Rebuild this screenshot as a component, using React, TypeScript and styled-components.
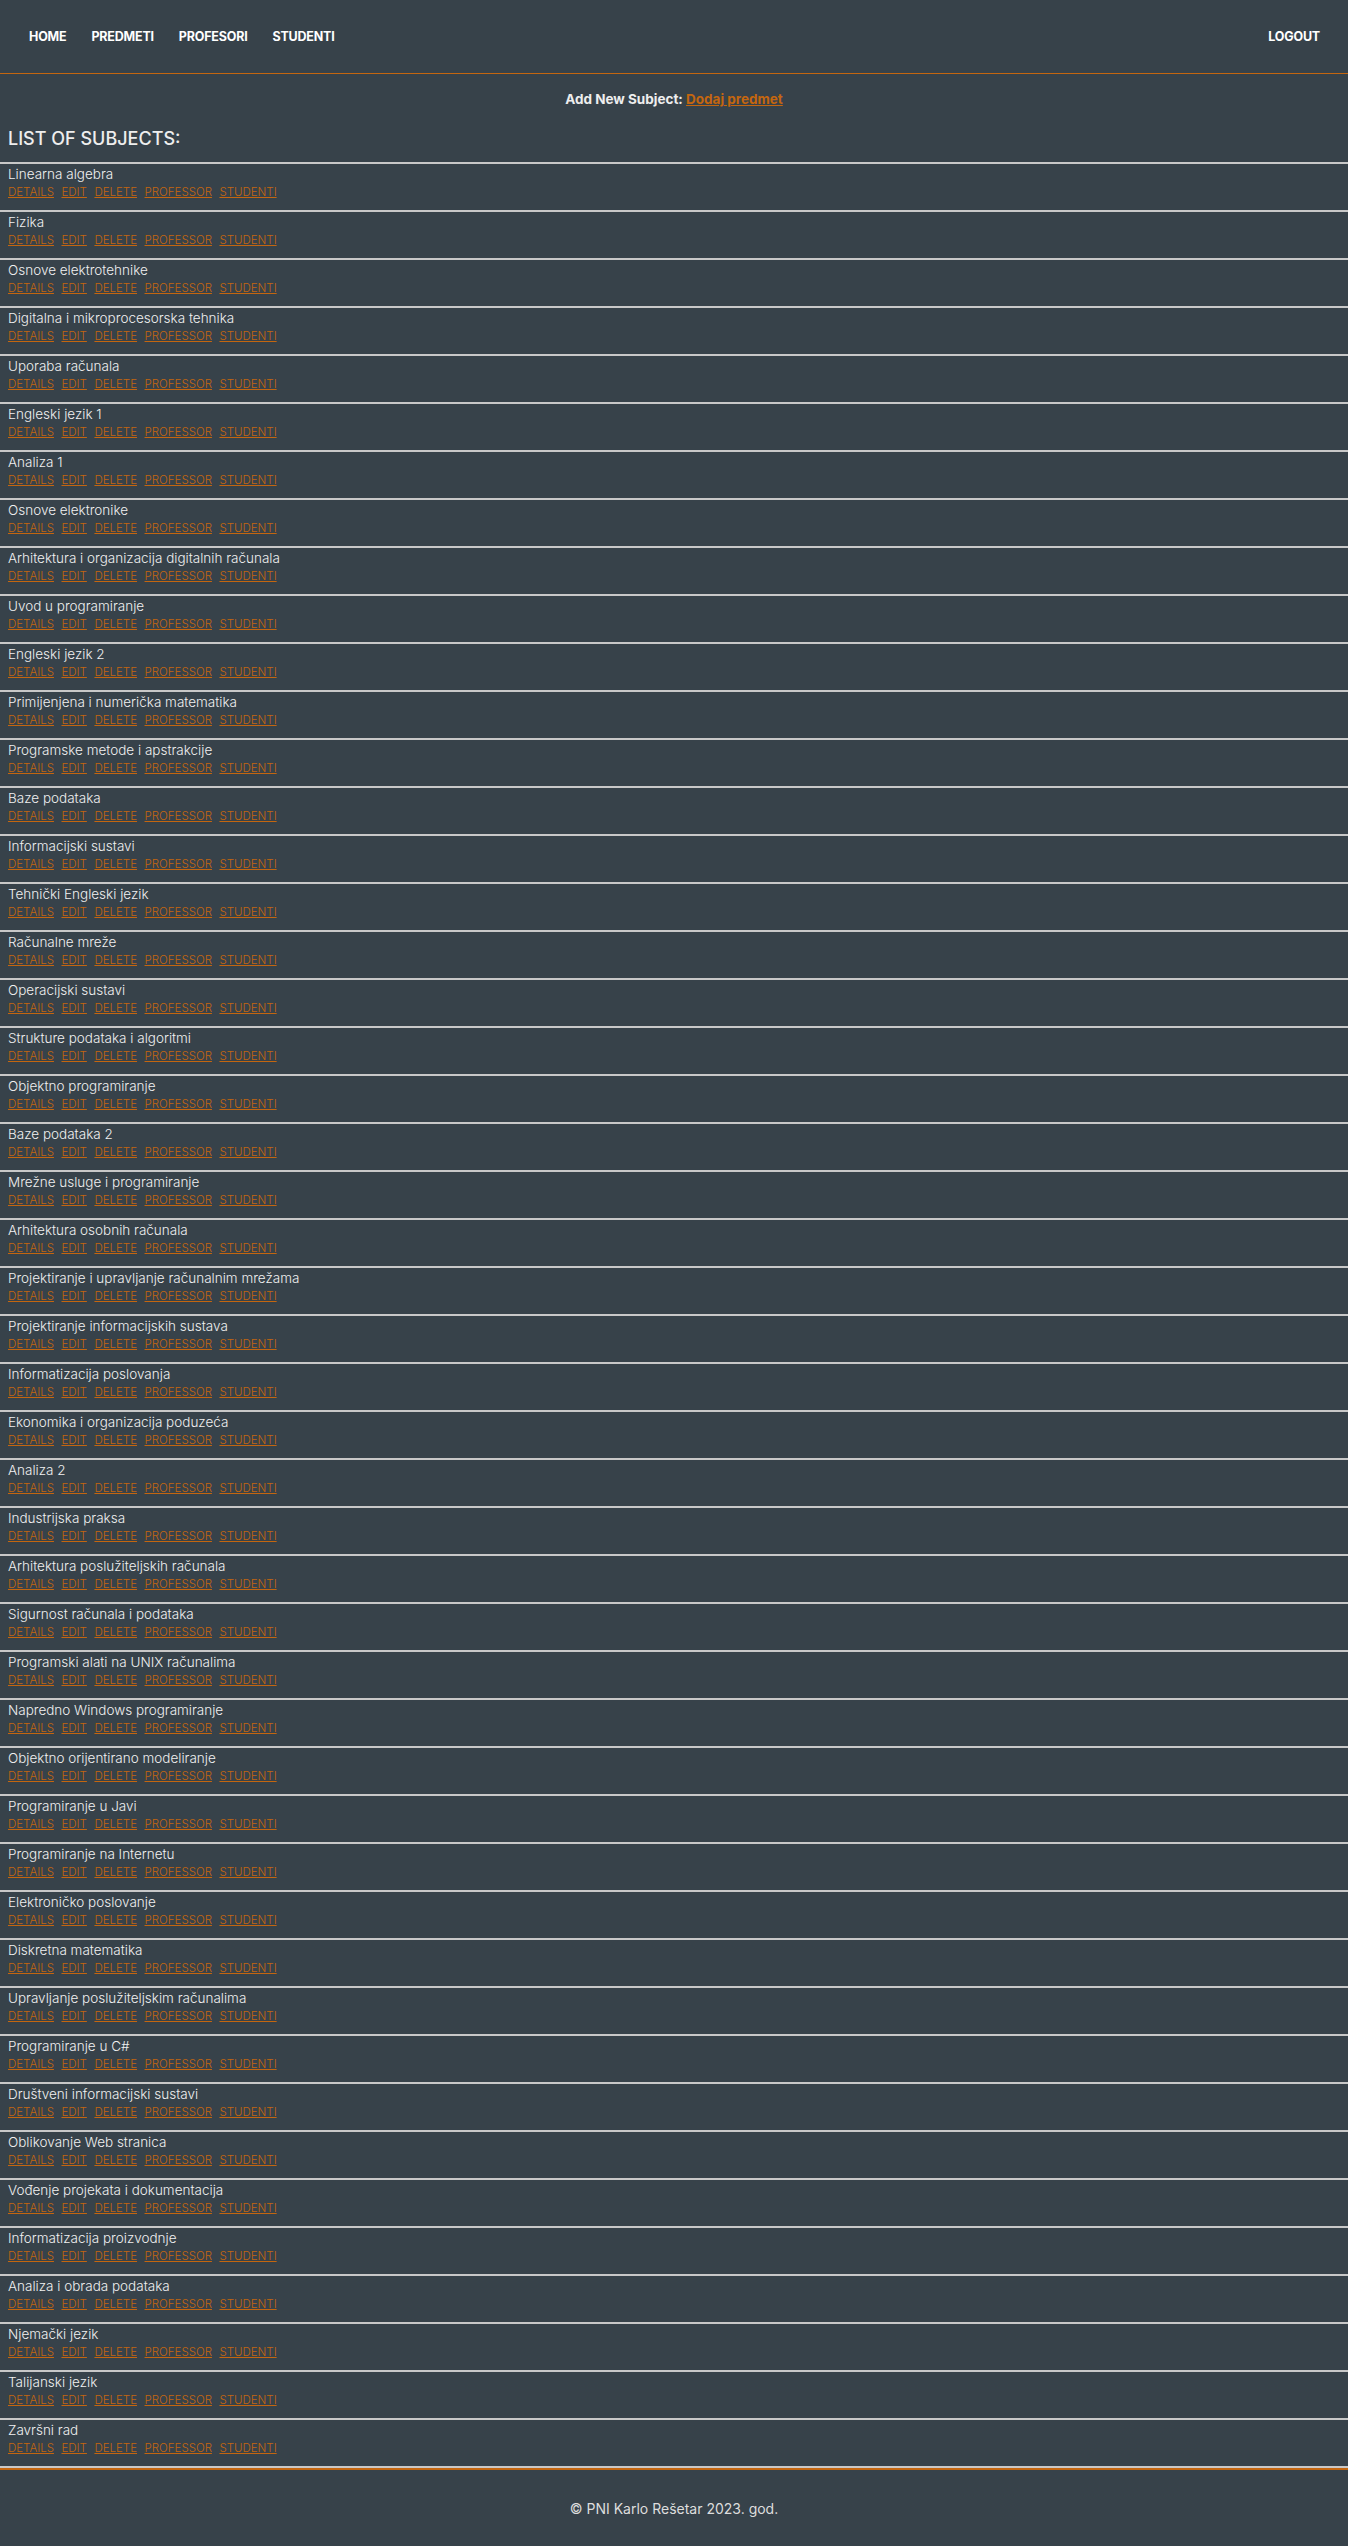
import styled, { createGlobalStyle } from 'styled-components'

const subjects = [
  'Linearna algebra',
  'Fizika',
  'Osnove elektrotehnike',
  'Digitalna i mikroprocesorska tehnika',
  'Uporaba računala',
  'Engleski jezik 1',
  'Analiza 1',
  'Osnove elektronike',
  'Arhitektura i organizacija digitalnih računala',
  'Uvod u programiranje',
  'Engleski jezik 2',
  'Primijenjena i numerička matematika',
  'Programske metode i apstrakcije',
  'Baze podataka',
  'Informacijski sustavi',
  'Tehnički Engleski jezik',
  'Računalne mreže',
  'Operacijski sustavi',
  'Strukture podataka i algoritmi',
  'Objektno programiranje',
  'Baze podataka 2',
  'Mrežne usluge i programiranje',
  'Arhitektura osobnih računala',
  'Projektiranje i upravljanje računalnim mrežama',
  'Projektiranje informacijskih sustava',
  'Informatizacija poslovanja',
  'Ekonomika i organizacija poduzeća',
  'Analiza 2',
  'Industrijska praksa',
  'Arhitektura poslužiteljskih računala',
  'Sigurnost računala i podataka',
  'Programski alati na UNIX računalima',
  'Napredno Windows programiranje',
  'Objektno orijentirano modeliranje',
  'Programiranje u Javi',
  'Programiranje na Internetu',
  'Elektroničko poslovanje',
  'Diskretna matematika',
  'Upravljanje poslužiteljskim računalima',
  'Programiranje u C#',
  'Društveni informacijski sustavi',
  'Oblikovanje Web stranica',
  'Vođenje projekata i dokumentacija',
  'Informatizacija proizvodnje',
  'Analiza i obrada podataka',
  'Njemački jezik',
  'Talijanski jezik',
  'Završni rad',
]

const actions = ['DETAILS', 'EDIT', 'DELETE', 'PROFESSOR', 'STUDENTI']

const GlobalStyle = createGlobalStyle`
  body {
    margin: 0;
    background-color: #37424a;
    font-family: Inter, "Noto Sans", sans-serif;
    color: #e8e8e8;
  }
`

const Header = styled.header`
  display: flex;
  justify-content: space-between;
  align-items: center;
  height: 73px;
  padding: 0 28px 0 29px;
  border-bottom: 1px solid #c4660f;
`

const Nav = styled.nav`
  display: flex;
  gap: 25px;
`

const NavLink = styled.a`
  color: #fff;
  font-size: 12.5px;
  font-weight: 700;
  text-decoration: none;
  letter-spacing: -0.2px;
`

const AddRow = styled.div`
  margin-top: 15px;
  text-align: center;
  font-size: 13.5px;
  line-height: 20px;
  font-weight: 700;
  color: #eee;
`

const OrangeLink = styled.a`
  color: #c4660f;
  text-decoration: underline;
`

const Heading = styled.h2`
  margin: 18px 0 11px 8px;
  font-size: 18px;
  line-height: 24px;
  font-weight: 500;
  color: #eee;
`

const List = styled.ul`
  list-style: none;
  margin: 0;
  padding: 0;
  border-bottom: 2px solid #c8c8c8;
`

const Row = styled.li`
  border-top: 2px solid #c8c8c8;
  padding: 1px 8px 9px;
`

const Title = styled.div`
  font-size: 13.5px;
  line-height: 18px;
  font-weight: 300;
  color: #f0f0f0;
`

const Actions = styled.div`
  display: flex;
  gap: 7.5px;
  line-height: 18px;
`

const ActionLink = styled.a`
  color: #c4660f;
  font-size: 11.5px;
  font-weight: 300;
  text-decoration: underline;
`

const Footer = styled.footer`
  border-top: 2px solid #c4660f;
  height: 76px;
  display: flex;
  align-items: center;
  justify-content: center;
  font-size: 14px;
  color: #ddd;
`

export default function App() {
  return (
    <>
      <GlobalStyle />
      <Header>
        <Nav>
          <NavLink href="#">HOME</NavLink>
          <NavLink href="#">PREDMETI</NavLink>
          <NavLink href="#">PROFESORI</NavLink>
          <NavLink href="#">STUDENTI</NavLink>
        </Nav>
        <NavLink href="#">LOGOUT</NavLink>
      </Header>
      <AddRow>
        Add New Subject: <OrangeLink href="#">Dodaj predmet</OrangeLink>
      </AddRow>
      <Heading>LIST OF SUBJECTS:</Heading>
      <List>
        {subjects.map((s) => (
          <Row key={s}>
            <Title>{s}</Title>
            <Actions>
              {actions.map((a) => (
                <ActionLink key={a} href="#">
                  {a}
                </ActionLink>
              ))}
            </Actions>
          </Row>
        ))}
      </List>
      <Footer>© PNI Karlo Rešetar 2023. god.</Footer>
    </>
  )
}
